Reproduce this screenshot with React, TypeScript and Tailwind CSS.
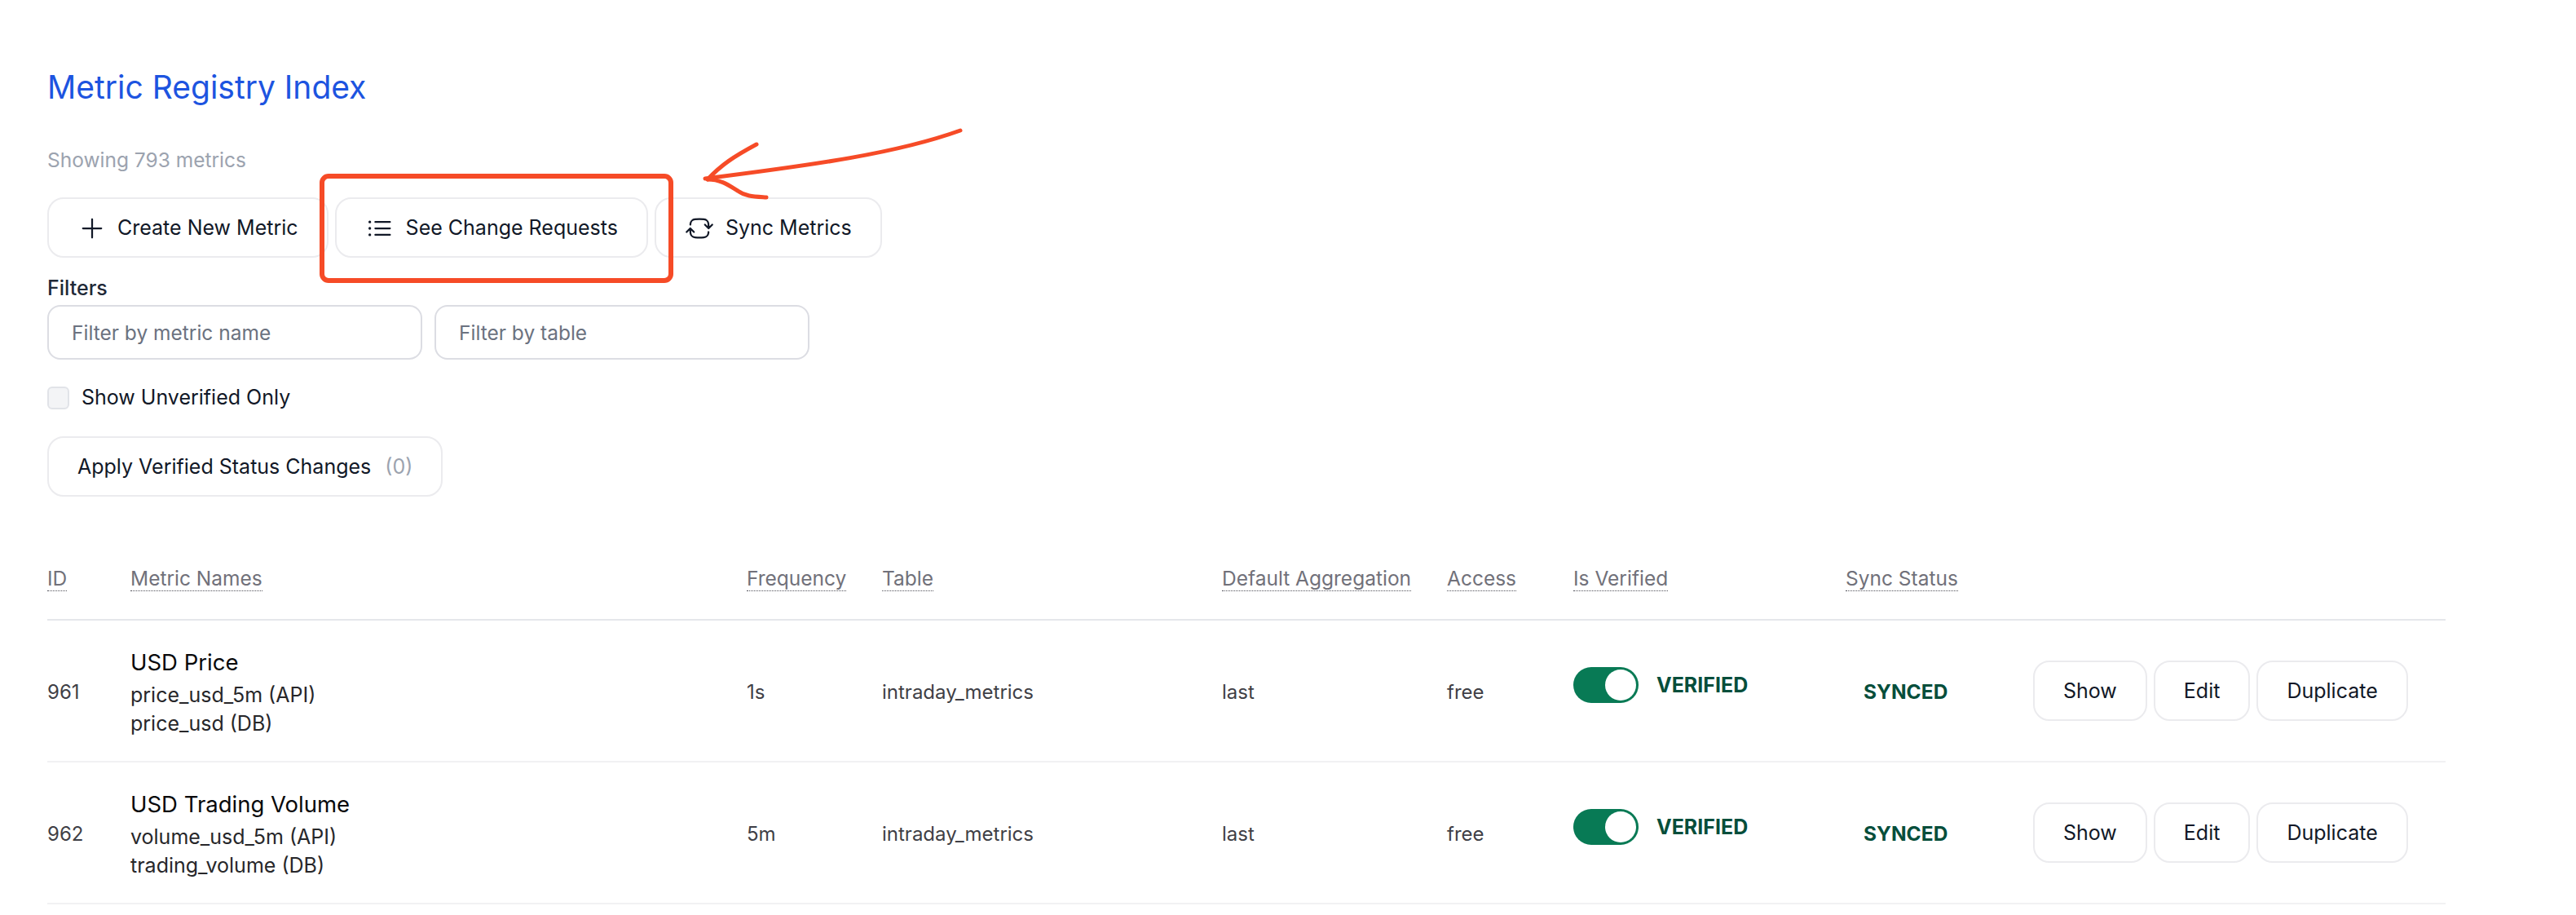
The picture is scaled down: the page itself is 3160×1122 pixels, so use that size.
import React from 'react';
import { HiOutlineArrowPathRoundedSquare, HiOutlineListBullet, HiOutlinePlus } from 'react-icons/hi2';

const COLUMNS = [
  { label: 'ID', width: 'w-[102px]' },
  { label: 'Metric Names', width: 'w-[756px]' },
  { label: 'Frequency', width: 'w-[166px]' },
  { label: 'Table', width: 'w-[417px]' },
  { label: 'Default Aggregation', width: 'w-[276px]' },
  { label: 'Access', width: 'w-[155px]' },
  { label: 'Is Verified', width: 'w-[334px]' },
  { label: 'Sync Status', width: 'w-[230px]' },
  { label: '', width: 'w-[506px]' },
];

const METRICS = [
  { id: 961, name: 'USD Price', api: 'price_usd_5m (API)', db: 'price_usd (DB)', frequency: '1s' },
  { id: 962, name: 'USD Trading Volume', api: 'volume_usd_5m (API)', db: 'trading_volume (DB)', frequency: '5m' },
];

const Btn: React.FC<{ children: React.ReactNode }> = ({ children }) => (
  <button className="flex h-[74px] items-center rounded-[20px] border-2 border-[#ebebee] bg-white px-[35px] pt-[2px] text-[25px] text-[#111827]">
    {children}
  </button>
);

export default function App() {
  return (
    <div className="relative min-h-[1122px] bg-white px-[58px] pt-[80px] font-['Inter',sans-serif]">
      <h1 className="text-[39px] leading-[54px] text-[#1d54e0]">Metric Registry Index</h1>
      <p className="mt-[44px] text-[24.5px] leading-[36px] text-[#9ca3af]">Showing 793 metrics</p>

      <div className="mt-[28px] flex gap-2">
        <Btn>
          <HiOutlinePlus className="mr-[13px] h-[36px] w-[36px]" />
          Create New Metric
        </Btn>
        <Btn>
          <HiOutlineListBullet className="mr-[14px] h-[36px] w-[36px]" />
          See Change Requests
        </Btn>
        <Btn>
          <HiOutlineArrowPathRoundedSquare className="mr-[14px] h-[36px] w-[36px]" />
          Sync Metrics
        </Btn>
      </div>

      <p className="mt-[20px] text-[25px] font-medium leading-[34px] text-[#1f2937]">Filters</p>
      <div className="mt-[4px] flex gap-[15px]">
        <input
          placeholder="Filter by metric name"
          className="h-[67px] w-[460px] rounded-[16px] border-2 border-[#dcdde3] px-[28px] text-[24.5px] placeholder:text-[#6b7280]"
        />
        <input
          placeholder="Filter by table"
          className="h-[67px] w-[460px] rounded-[16px] border-2 border-[#dcdde3] px-[28px] text-[24.5px] placeholder:text-[#6b7280]"
        />
      </div>

      <label className="mt-[33px] flex h-[28px] items-center gap-[15px] text-[25px] text-[#111827]">
        <span className="h-[28px] w-[27px] rounded-[6px] border-2 border-[#e1e3e8] bg-[#f3f4f6]" />
        Show Unverified Only
      </label>

      <div className="mt-[33px] flex">
        <Btn>
          Apply Verified Status Changes
          <span className="ml-[17px] text-[#9ca3af]">(0)</span>
        </Btn>
      </div>

      <table className="mt-[66px] w-[2942px] table-fixed border-collapse text-left">
        <colgroup>
          {COLUMNS.map(col => (
            <col key={col.label} className={col.width} />
          ))}
        </colgroup>
        <thead>
          <tr className="h-[85px] border-b-2 border-[#e5e7eb]">
            {COLUMNS.map(col => (
              <th key={col.label} className="pb-[15px] text-[24.5px] font-normal text-[#71717a]">
                {col.label && <span className="border-b border-dotted border-[#52525b]">{col.label}</span>}
              </th>
            ))}
          </tr>
        </thead>
        <tbody>
          {METRICS.map(metric => (
            <tr key={metric.id} className="h-[174px] border-b-2 border-[#f1f1f3] text-[24px] text-[#3f3f46]">
              <td className="pt-[3px]">{metric.id}</td>
              <td className="pt-[5px]">
                <div className="mb-[5px] text-[27.5px] leading-[36px] text-[#09090b]">{metric.name}</div>
                <div className="text-[25px] leading-[35px] text-[#27272a]">{metric.api}</div>
                <div className="text-[25px] leading-[35px] text-[#27272a]">{metric.db}</div>
              </td>
              <td className="pt-[3px]">{metric.frequency}</td>
              <td className="pt-[3px]">intraday_metrics</td>
              <td className="pt-[3px]">last</td>
              <td className="pt-[3px]">free</td>
              <td>
                <div className="mb-[14px] flex items-center gap-[22px]">
                  <span className="flex h-[44px] w-[80px] items-center justify-end rounded-full bg-[#087a55] pr-[3px]">
                    <span className="h-[38px] w-[38px] rounded-full bg-white" />
                  </span>
                  <span className="pt-[2px] text-[25px] font-bold text-[#064e3b]">VERIFIED</span>
                </div>
              </td>
              <td className="pt-[3px]">
                <span className="ml-[22px] text-[24.5px] font-bold text-[#064e3b]">SYNCED</span>
              </td>
              <td>
                <div className="flex gap-2">
                  <Btn>Show</Btn>
                  <Btn>Edit</Btn>
                  <Btn>Duplicate</Btn>
                </div>
              </td>
            </tr>
          ))}
        </tbody>
      </table>

      {/* hand drawn annotation on top of the page */}
      <svg className="pointer-events-none absolute left-0 top-0" width="1200" height="360" fill="none" stroke="#f64b27" strokeLinecap="round">
        <rect x="395" y="216" width="428" height="128" rx="8" strokeWidth="6" />
        <path d="M1178 160C1100 188 1000 202 865 219" strokeWidth="5" />
        <path d="M928 177C900 192 885 202 868 220" strokeWidth="5" />
        <path d="M868 220C885 220 895 228 905 234C915 241 925 241 940 242" strokeWidth="5" />
      </svg>
    </div>
  );
}
